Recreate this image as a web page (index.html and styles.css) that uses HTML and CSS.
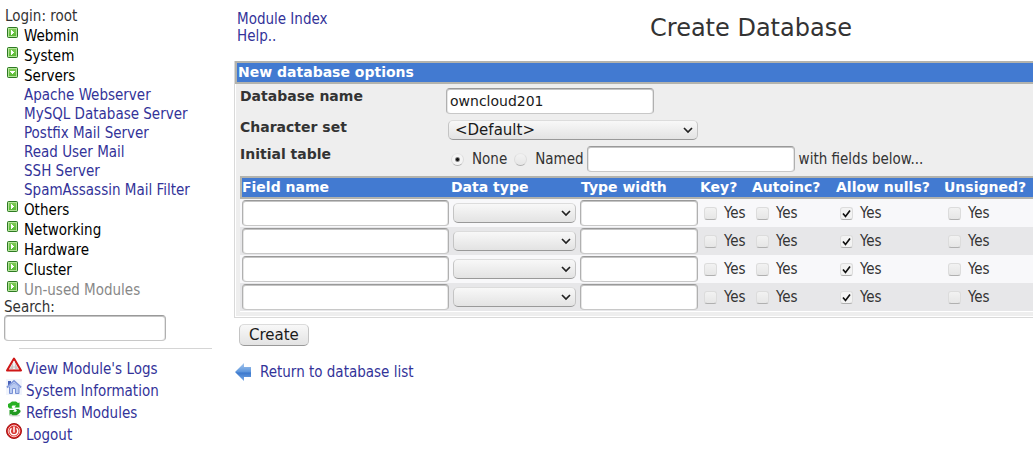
FILE: index.html
```
<!DOCTYPE html>
<html lang="en">
<head>
<meta charset="utf-8">
<title>Create Database</title>
<link rel="stylesheet" href="styles.css">
</head>
<body>
<svg class="defs" aria-hidden="true">
  <defs>
    <linearGradient id="green" x1="0" y1="0" x2="0" y2="1"><stop offset="0" stop-color="#7fcb58"/><stop offset="1" stop-color="#58b834"/></linearGradient>
    <linearGradient id="blue" x1="0" y1="0" x2="0" y2="1"><stop offset="0" stop-color="#a9c9ee"/><stop offset=".5" stop-color="#5b94dc"/><stop offset=".55" stop-color="#3b78cd"/><stop offset="1" stop-color="#79aae6"/></linearGradient>
    <symbol id="closed" viewBox="0 0 11 11"><rect x=".5" y=".5" width="10" height="10" rx="1" fill="#62bd3e" stroke="#2d7a22"/><rect x="1.5" y="1.5" width="8" height="8" fill="url(#green)" stroke="#b4e29a"/><path d="M4 3h1v1h1v1h1v1h-1v1h-1v1h-1z" fill="#fff"/></symbol>
    <symbol id="open" viewBox="0 0 11 11"><rect x=".5" y=".5" width="10" height="10" rx="1" fill="#62bd3e" stroke="#2d7a22"/><rect x="1.5" y="1.5" width="8" height="8" fill="url(#green)" stroke="#b4e29a"/><path d="M3 4h5v1h-1v1h-1v1h-1v-1h-1v-1h-1z" fill="#fff"/></symbol>
  </defs>
</svg>
<div class="page">
  <nav class="sidebar">
    <div class="login">Login: root</div>
    <a class="category" href="#"><svg><use href="#closed"/></svg>Webmin</a>
    <a class="category" href="#"><svg><use href="#closed"/></svg>System</a>
    <a class="category" href="#"><svg><use href="#open"/></svg>Servers</a>
    <div class="modules">
      <a href="#">Apache Webserver</a>
      <a href="#">MySQL Database Server</a>
      <a href="#">Postfix Mail Server</a>
      <a href="#">Read User Mail</a>
      <a href="#">SSH Server</a>
      <a href="#">SpamAssassin Mail Filter</a>
    </div>
    <a class="category" href="#"><svg><use href="#closed"/></svg>Others</a>
    <a class="category" href="#"><svg><use href="#closed"/></svg>Networking</a>
    <a class="category" href="#"><svg><use href="#closed"/></svg>Hardware</a>
    <a class="category" href="#"><svg><use href="#closed"/></svg>Cluster</a>
    <a class="category unused" href="#"><svg><use href="#closed"/></svg>Un-used Modules</a>
    <label class="search-label" for="search">Search:</label>
    <input class="text search" id="search" type="text">
    <hr class="rule">
    <a class="action" href="#"><svg viewBox="0 0 16 16"><path d="M8 1.500L15 13.500H1z" fill="#f0e4e4" stroke="#cf1717" stroke-width="2" stroke-linejoin="round"/><path d="M8 4L12 12H4z" fill="#c9c3c3"/><path d="M8 4.500v5M8 10.500v1.500" stroke="#fff" stroke-width="1.500"/></svg>View Module's Logs</a>
    <a class="action" href="#"><svg viewBox="0 0 16 16"><path fill="#f1f4fc" d="M0 0h16v16H0z"/><path d="M2 2h3v4H2z" fill="#4861b8"/><path d="M3.500 7.500V14.500h3v-5h3v5h3.500V7.500L8 3.500z" fill="#b9caf1" stroke="#7890d4"/><path d="M1 8.500L8 2l7 6.500" fill="none" stroke="#7c94d8" stroke-width="2"/><path d="M2 8.500L8 3l6 5.500" fill="none" stroke="#cddaf7" stroke-width=".7"/></svg>System Information</a>
    <a class="action" href="#"><svg viewBox="0 0 16 16"><ellipse cx="8.500" cy="14.500" rx="5.500" ry="1" fill="#d5dad5"/><path d="M2 3l2-1 2-1.500h4L12 2l1.500-.5v5H8.500L10 4.500H6.500L5.500 6l1.500 1.500H3.500L2 6z" fill="#28b023"/><path d="M14.500 11l-2 2-2 1.200h-4L5 13l-1.500 1V9H8.500L7 10.800h3L11 9.500 9.500 8h3l2 1.500z" fill="#229a20"/></svg>Refresh Modules</a>
    <a class="action" href="#"><svg viewBox="0 0 16 16"><circle cx="8" cy="8" r="7.500" fill="#d51b1b" stroke="#a51616"/><circle cx="8" cy="8" r="5.800" fill="#d93a35" stroke="#f5c4c1"/><path d="M5.500 5.200a3.800 3.800 0 1 0 5 0M8 3.500v6" fill="none" stroke="#fff" stroke-width="1.500"/></svg>Logout</a>
  </nav>
  <main class="main">
    <header class="header">
      <div class="header-links"><a href="#">Module Index</a><a href="#">Help..</a></div>
      <h1>Create Database</h1>
    </header>
    <form>
      <section class="panel">
        <h2>New database options</h2>
        <div class="options">
          <div class="option">
            <label class="name" for="dbname">Database name</label>
            <input class="text wide" id="dbname" type="text" value="owncloud201">
          </div>
          <div class="option charset">
            <label class="name" for="charset">Character set</label>
            <select class="drop" id="charset"><option>&lt;Default&gt;</option></select>
          </div>
          <div class="option">
            <span class="name">Initial table</span>
            <div class="choices">
              <label><input type="radio" name="table" checked>None</label>
              <label><input type="radio" name="table">Named</label>
              <input class="text wide" type="text" aria-label="Table name">
              <span>with fields below...</span>
            </div>
          </div>
          <table class="fields">
            <colgroup><col class="c-name"><col class="c-type"><col class="c-width"><col class="c-key"><col class="c-auto"><col class="c-null"><col></colgroup>
            <thead><tr><th>Field name</th><th>Data type</th><th>Type width</th><th>Key?</th><th>Autoinc?</th><th>Allow nulls?</th><th>Unsigned?</th></tr></thead>
            <tbody>
              <tr><td><input class="text" type="text" aria-label="Field name"></td><td><select class="drop" aria-label="Data type"><option></option></select></td><td><input class="text" type="text" aria-label="Type width"></td><td><label><input type="checkbox">Yes</label></td><td><label><input type="checkbox">Yes</label></td><td><label><input type="checkbox" checked>Yes</label></td><td><label><input type="checkbox">Yes</label></td></tr>
              <tr><td><input class="text" type="text" aria-label="Field name"></td><td><select class="drop" aria-label="Data type"><option></option></select></td><td><input class="text" type="text" aria-label="Type width"></td><td><label><input type="checkbox">Yes</label></td><td><label><input type="checkbox">Yes</label></td><td><label><input type="checkbox" checked>Yes</label></td><td><label><input type="checkbox">Yes</label></td></tr>
              <tr><td><input class="text" type="text" aria-label="Field name"></td><td><select class="drop" aria-label="Data type"><option></option></select></td><td><input class="text" type="text" aria-label="Type width"></td><td><label><input type="checkbox">Yes</label></td><td><label><input type="checkbox">Yes</label></td><td><label><input type="checkbox" checked>Yes</label></td><td><label><input type="checkbox">Yes</label></td></tr>
              <tr><td><input class="text" type="text" aria-label="Field name"></td><td><select class="drop" aria-label="Data type"><option></option></select></td><td><input class="text" type="text" aria-label="Type width"></td><td><label><input type="checkbox">Yes</label></td><td><label><input type="checkbox">Yes</label></td><td><label><input type="checkbox" checked>Yes</label></td><td><label><input type="checkbox">Yes</label></td></tr>
            </tbody>
          </table>
        </div>
      </section>
      <button class="create" type="submit">Create</button>
    </form>
    <a class="return" href="#"><svg viewBox="0 0 16 18"><path d="M0 9L9 0v4h7v10H9v4z" fill="url(#blue)"/></svg>Return to database list</a>
  </main>
</div>
</body>
</html>
```
FILE: styles.css
```
* { box-sizing: border-box; }
body {
  margin: 0;
  background: #fff;
  color: #333;
  font: 15px/20px "DejaVu Sans Condensed", "DejaVu Sans", sans-serif;
}
a { color: #333399; text-decoration: none; }
input, select, button { margin: 0; font: 14px "DejaVu Sans", sans-serif; color: #1a1a1a; }
.defs { position: absolute; width: 0; height: 0; }
.page { display: flex; align-items: flex-start; }

.sidebar { flex: none; width: 234px; padding: 6px 22px 0 4px; display: flex; flex-direction: column; }
.login { padding-left: 1px; }
.category { display: flex; gap: 6px; padding-left: 3px; color: #000; }
.category svg { width: 11px; height: 11px; margin-top: 1px; }
.unused { color: #888; }
.modules { display: flex; flex-direction: column; padding-left: 20px; line-height: 19px; }
.search-label { line-height: 15px; }
.search { width: 162px; }
.rule { width: 193px; height: 1px; margin: 7px 0 9px 15px; border: 0; background: #d5d5d5; }
.action { display: flex; gap: 4px; padding-left: 2px; line-height: 22px; }
.action svg { width: 16px; height: 16px; margin-top: -1px; }

.text {
  height: 26px;
  padding: 0 3px;
  background: #fff;
  border: 1px solid #b0b0b0;
  border-top-color: #999;
  border-bottom-color: #c8c8c8;
  border-radius: 4px;
  box-shadow: inset 0 1px #c4c4c4, inset 1px 0 #e6e6e6, inset -1px 0 #e6e6e6;
}
.wide { width: 208px; }
.drop, .create {
  height: 20px;
  border: 1px solid #c4c4c4;
  border-top-color: #dcdcdc;
  border-bottom-color: #999;
  border-radius: 5px;
  background: linear-gradient(#f8f8f8, #e3e3e3);
  font-size: 15px;
}
.drop {
  appearance: none;
  padding: 0 24px 0 6px;
  background:
    url("data:image/svg+xml,%3Csvg xmlns='http://www.w3.org/2000/svg' width='10' height='7'%3E%3Cpath d='M1 1l4 4 4-4' fill='none' stroke='%23222' stroke-width='1.700'/%3E%3C/svg%3E") no-repeat right 4px center,
    linear-gradient(#f8f8f8, #e3e3e3);
}
input[type="radio"], input[type="checkbox"] {
  appearance: none;
  flex: none;
  width: 13px;
  height: 13px;
  border: 1px solid #dcdcdc;
  border-bottom-color: #b0b0b0;
  border-radius: 3px;
  background: linear-gradient(#f2f2f2, #e6e6e6);
}
input[type="radio"] { border-radius: 50%; border-top-color: #e6e6e6; }
input[type="radio"]:checked { background: radial-gradient(circle, #111 1px, #f4f4f4 3px); }
input[type="checkbox"]:checked {
  background: url("data:image/svg+xml,%3Csvg xmlns='http://www.w3.org/2000/svg' width='11' height='11'%3E%3Cpath d='M2 5.500l2.500 3 4.500-6' fill='none' stroke='%23111' stroke-width='1.700'/%3E%3C/svg%3E") center, #f3f3f3;
}

.main { flex: 1; min-width: 0; }
.header { display: grid; grid-template-columns: 232px 1fr; padding: 11px 0 0 3px; height: 61px; }
.header-links { display: flex; flex-direction: column; line-height: 17px; }
h1 { margin: 0; font: 400 24px/34px "DejaVu Sans", sans-serif; text-align: center; }

.panel { border: 1px solid #d9d9d9; border-right: 0; background: #eee; }
h2 {
  margin: 0;
  padding-left: 1px;
  border: solid #b3b3ad;
  border-width: 2px 0 2px 2px;
  background: #427ad1;
  color: #fff;
  font: 700 14px/19px "DejaVu Sans", sans-serif;
}
.panel h2 { margin-top: -1px; }
.options { padding: 4px 0 4px 5px; border: solid #fff; border-width: 0 0 1px 1px; }
.option { display: grid; grid-template-columns: 206px 1fr; align-items: start; margin-left: -1px; padding-bottom: 4px; }
.option:nth-child(3) { padding: 1px 0 4px; }
.name { font: 700 14px/17px "DejaVu Sans", sans-serif; }
.charset { padding: 2px 0 5px; }
.charset .drop { width: 250px; margin-left: 2px; }
.charset .name { line-height: 14px; }
.choices { display: flex; align-items: center; }
.choices label { display: flex; align-items: center; gap: 8px; }
.choices label:first-child { margin: 0 7px 0 5px; }
.choices label:nth-child(2) { margin-right: 3px; }
.choices span { margin-left: 4px; }

.fields { width: calc(100% + 1px); margin-left: -1px; border-collapse: separate; border-spacing: 0; border-bottom: 1px solid #fff; table-layout: fixed; }
.c-name { width: 209px; }
.c-type { width: 130px; }
.c-width { width: 119px; }
.c-key { width: 52px; }
.c-auto { width: 84px; }
.c-null { width: 108px; }
th {
  padding: 0 0 0 2px;
  border: solid #b3b3ad;
  border-width: 2px 0;
  background: #427ad1;
  color: #fff;
  font: 700 14px/19px "DejaVu Sans", sans-serif;
  text-align: left;
  white-space: nowrap;
}
th:first-child { padding-left: 0; border-left-width: 2px; }
td { height: 28px; padding: 0 0 0 1px; background: #f8f8fa; }
tr:nth-child(even) td { background: #e7e7e9; }
td:first-child { padding-left: 2px; }
td .text, td .drop { display: block; width: 100%; }
td:nth-child(2) { padding: 0 3px 0 4px; }
td label { display: flex; align-items: center; gap: 7px; padding-left: 5px; }

.create { display: block; height: 22px; margin: 6px 0 0 5px; padding: 0 9px; line-height: 20px; }
.return { display: inline-flex; align-items: center; gap: 9px; margin: 16px 0 0 1px; }
.return svg { width: 16px; height: 18px; }
```
